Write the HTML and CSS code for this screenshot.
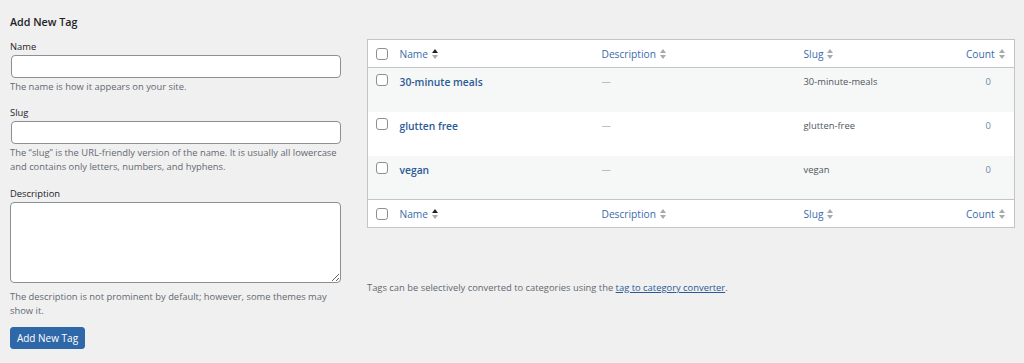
FILE: index.html
```html
<!DOCTYPE html>
<html lang="en">
<head>
<meta charset="utf-8">
<title>Tags</title>
<link rel="stylesheet" href="styles.css">
</head>
<body>
<div class="wrap">
  <div class="col-left">
    <h2 class="form-title">Add New Tag</h2>
    <div class="field">
      <label class="field-label">Name</label>
      <input class="text-input" type="text">
      <p class="help">The name is how it appears on your site.</p>
    </div>
    <div class="field">
      <label class="field-label">Slug</label>
      <input class="text-input" type="text">
      <p class="help">The “slug” is the URL-friendly version of the name. It is usually all lowercase and contains only letters, numbers, and hyphens.</p>
    </div>
    <div class="field field-desc">
      <label class="field-label">Description</label>
      <textarea class="text-area"></textarea>
      <p class="help help-area">The description is not prominent by default; however, some themes may show it.</p>
    </div>
    <button class="primary-btn" type="button">Add New Tag</button>
  </div>
  <div class="col-right">
    <table class="tags-table">
      <colgroup>
        <col class="c-cb"><col class="c-name"><col class="c-desc"><col class="c-slug"><col class="c-count">
      </colgroup>
      <thead>
        <tr class="head-row">
          <th class="cb-cell"><span class="checkbox"></span></th>
          <th class="th-cell"><a class="sort-link">Name <svg class="sort" viewBox="0 0 6 10" width="6" height="10"><path class="up-on" d="M0 4 L3 0 L6 4 Z"/><path class="down" d="M0 6 L3 10 L6 6 Z"/></svg></a></th>
          <th class="th-cell"><a class="sort-link">Description <svg class="sort" viewBox="0 0 6 10" width="6" height="10"><path class="up" d="M0 4 L3 0 L6 4 Z"/><path class="down" d="M0 6 L3 10 L6 6 Z"/></svg></a></th>
          <th class="th-cell"><a class="sort-link">Slug <svg class="sort" viewBox="0 0 6 10" width="6" height="10"><path class="up" d="M0 4 L3 0 L6 4 Z"/><path class="down" d="M0 6 L3 10 L6 6 Z"/></svg></a></th>
          <th class="th-cell th-count"><a class="sort-link">Count <svg class="sort" viewBox="0 0 6 10" width="6" height="10"><path class="up" d="M0 4 L3 0 L6 4 Z"/><path class="down" d="M0 6 L3 10 L6 6 Z"/></svg></a></th>
        </tr>
      </thead>
      <tbody>
        <tr class="body-row alt">
          <td class="cb-cell"><span class="checkbox"></span></td>
          <td class="td-cell"><a class="row-title">30-minute meals</a></td>
          <td class="td-cell dash">—</td>
          <td class="td-cell">30-minute-meals</td>
          <td class="td-cell td-count"><a class="count-link">0</a></td>
        </tr>
        <tr class="body-row">
          <td class="cb-cell"><span class="checkbox"></span></td>
          <td class="td-cell"><a class="row-title">glutten free</a></td>
          <td class="td-cell dash">—</td>
          <td class="td-cell">glutten-free</td>
          <td class="td-cell td-count"><a class="count-link">0</a></td>
        </tr>
        <tr class="body-row alt">
          <td class="cb-cell"><span class="checkbox"></span></td>
          <td class="td-cell"><a class="row-title">vegan</a></td>
          <td class="td-cell dash">—</td>
          <td class="td-cell">vegan</td>
          <td class="td-cell td-count"><a class="count-link">0</a></td>
        </tr>
      </tbody>
      <tfoot>
        <tr class="foot-row">
          <th class="cb-cell"><span class="checkbox"></span></th>
          <th class="th-cell"><a class="sort-link">Name <svg class="sort" viewBox="0 0 6 10" width="6" height="10"><path class="up-on" d="M0 4 L3 0 L6 4 Z"/><path class="down" d="M0 6 L3 10 L6 6 Z"/></svg></a></th>
          <th class="th-cell"><a class="sort-link">Description <svg class="sort" viewBox="0 0 6 10" width="6" height="10"><path class="up" d="M0 4 L3 0 L6 4 Z"/><path class="down" d="M0 6 L3 10 L6 6 Z"/></svg></a></th>
          <th class="th-cell"><a class="sort-link">Slug <svg class="sort" viewBox="0 0 6 10" width="6" height="10"><path class="up" d="M0 4 L3 0 L6 4 Z"/><path class="down" d="M0 6 L3 10 L6 6 Z"/></svg></a></th>
          <th class="th-cell th-count"><a class="sort-link">Count <svg class="sort" viewBox="0 0 6 10" width="6" height="10"><path class="up" d="M0 4 L3 0 L6 4 Z"/><path class="down" d="M0 6 L3 10 L6 6 Z"/></svg></a></th>
        </tr>
      </tfoot>
    </table>
    <p class="note">Tags can be selectively converted to categories using the <a class="note-link">tag to category converter</a>.</p>
  </div>
</div>
</body>
</html>
```
FILE: styles.css
```css
* { box-sizing: border-box; }
html, body { margin: 0; padding: 0; }
body {
  background: #f0f0f1;
  color: #3c434a;
  font-family: "Open Sans", "Noto Sans", sans-serif;
  font-size: 9.4px;
  width: 1024px;
  height: 363px;
  overflow: hidden;
}
.wrap {
  display: grid;
  grid-template-columns: 331px 1fr;
  column-gap: 26px;
  padding: 0 9px 0 10px;
}
.form-title {
  margin: 16px 0 11px;
  font-size: 10.7px;
  line-height: 13px;
  font-weight: 600;
  color: #1d2327;
}
.field { display: flex; flex-direction: column; margin-bottom: 12px; }
.field-desc { padding-top: 1px; }
.field-label {
  line-height: 14px;
  margin-bottom: 1px;
  color: #1d2327;
}
.text-input {
  height: 23px;
  border: 1px solid #8c8f94;
  border-radius: 4px;
  background: #fff;
  margin: 0 0 0 1px;
  width: 330px;
  font: inherit;
}
.text-area {
  height: 81px;
  width: 100%;
  border: 1px solid #8c8f94;
  border-radius: 4px;
  background: #fff;
  margin: 0;
  font: inherit;
  resize: vertical;
}
.help {
  margin: 2px 0 0;
  line-height: 14px;
  color: #646970;
}
.help-area { margin-top: 7px; }
.field:last-of-type { margin-bottom: 0; }
.primary-btn {
  margin-top: 9px;
  height: 22px;
  width: 75px;
  padding: 0;
  background: #2f68a8;
  border: 1px solid #2f68a8;
  border-radius: 3px;
  color: #fff;
  font: inherit;
  font-size: 10px;
  font-weight: 500;
  cursor: pointer;
}
.col-right { padding-top: 39px; }
.tags-table {
  width: 100%;
  border-collapse: collapse;
  border: 1px solid #c3c4c7;
  background: #fff;
  table-layout: fixed;
}
.c-cb { width: 25px; }
.c-name { width: 202px; }
.c-desc { width: 202px; }
.c-slug { width: 160px; }
.head-row { height: 28px; border-bottom: 1px solid #c3c4c7; }
.foot-row { height: 28px; border-top: 1px solid #c3c4c7; }
.body-row { height: 44px; }
.body-row.alt { background: #f6f7f7; }
.cb-cell { padding: 0 0 0 8px; text-align: left; }
.body-row .cb-cell { vertical-align: top; padding-top: 6px; }
.checkbox {
  display: block;
  width: 12px;
  height: 12px;
  border: 1px solid #8c8f94;
  border-radius: 3px;
  background: #fff;
}
.th-cell {
  padding: 0 7px;
  text-align: left;
  font-weight: 400;
}
.th-count { text-align: center; padding: 0; }
.sort-link {
  color: #3b6ba8;
  font-size: 10.2px;
  display: inline-flex;
  align-items: center;
  gap: 4px;
}
.sort { display: block; }
.sort .up, .sort .down { fill: #a7aaad; }
.sort .up-on { fill: #1d2327; }
.td-cell {
  vertical-align: top;
  padding: 6px 7px 0;
  line-height: 16px;
  color: #50575e;
}
.row-title { color: #2c5a96; font-weight: 600; font-size: 10.3px; }
.dash { color: #8c8f94; }
.td-count { text-align: center; padding-left: 6px; padding-right: 0; }
.count-link { color: #6d86a8; }
.note {
  margin: 53px 0 0;
  line-height: 14px;
  color: #646970;
}
.note-link { color: #2c5a96; text-decoration: underline; }
```
